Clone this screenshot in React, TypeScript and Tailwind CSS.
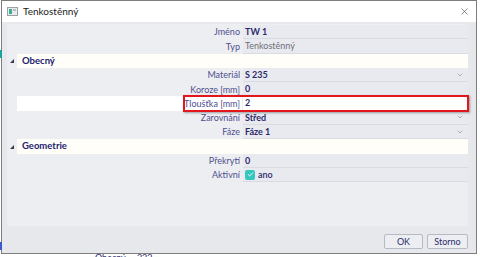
import { ChevronDown, Check, X } from 'lucide-react';

type Row =
  | { kind: 'section'; title: string }
  | { kind: 'prop'; label: string; value: string; muted?: boolean; select?: boolean; check?: boolean; selected?: boolean };

const rows: Row[] = [
  { kind: 'prop', label: 'Jméno', value: 'TW 1' },
  { kind: 'prop', label: 'Typ', value: 'Tenkostěnný', muted: true },
  { kind: 'section', title: 'Obecný' },
  { kind: 'prop', label: 'Materiál', value: 'S 235', select: true },
  { kind: 'prop', label: 'Koroze [mm]', value: '0' },
  { kind: 'prop', label: 'Tloušťka [mm]', value: '2', selected: true },
  { kind: 'prop', label: 'Zarovnání', value: 'Střed', select: true },
  { kind: 'prop', label: 'Fáze', value: 'Fáze 1', select: true },
  { kind: 'section', title: 'Geometrie' },
  { kind: 'prop', label: 'Překrytí', value: '0' },
  { kind: 'prop', label: 'Aktivní', value: 'ano', check: true },
];

function PropRow({ row }: { row: Row }) {
  if (row.kind === 'section') {
    return (
      <div className="flex h-[14.3px] items-center">
        <div className="w-[10px] flex justify-center">
          <span className="block w-0 h-0 border-l-[4px] border-l-transparent border-b-[4px] border-b-[#3a3a4a] mt-[1px]" />
        </div>
        <div className="flex-1 h-full bg-[#fffef8] flex items-center pl-[5px] text-[9.5px] font-bold text-[#22226e]">
          {row.title}
        </div>
      </div>
    );
  }
  return (
    <div className="flex h-[14.3px] items-stretch">
      <div className="w-[10px]" />
      <div
        className={`w-[225px] flex items-center justify-end pr-[2px] text-[9px] text-[#4e4e8e] ${
          row.selected ? 'bg-white' : ''
        }`}
      >
        {row.label}
      </div>
      <div
        className={`flex-1 ml-[1px] flex items-center pl-[2px] pr-[4px] border-b border-[#d9dbe2] ${
          row.selected ? 'bg-white' : 'bg-[#e9eaef]'
        }`}
      >
        {row.check && (
          <span className="w-[10px] h-[10px] rounded-[2px] bg-[#35c6bd] flex items-center justify-center mr-[3px]">
            <Check size={7} strokeWidth={3} color="white" />
          </span>
        )}
        <span
          className={`flex-1 text-[9px] ${
            row.muted ? 'text-[#6d6d7a] font-normal' : row.check ? 'text-[#2b2b6b] font-semibold' : 'text-[#2b2b6b] font-bold'
          }`}
        >
          {row.value}
        </span>
        {row.select && <ChevronDown size={8} strokeWidth={2} color="#8d92a3" />}
      </div>
    </div>
  );
}

export default function App() {
  return (
    <div className="w-[480px] h-[257px] bg-white relative overflow-hidden font-['Lato','Open_Sans',sans-serif]">
      <div className="absolute left-0 top-[50px] w-[2px] h-[8px] bg-[#1aa39a]" />
      <div className="absolute left-0 top-[242px] w-[2px] h-[8px] bg-[#3a5ad0]" />

      <div className="ml-[1px] w-[476px] h-[254px] border border-[#7d7d7d] bg-[#e6e8ec] flex flex-col">
        {/* title bar */}
        <div className="h-[21px] bg-white flex items-center pl-[5px] pr-[6px] shrink-0">
          <svg width="11" height="9" viewBox="0 0 11 9" className="mr-[5px]">
            <rect x="0.5" y="0.5" width="10" height="8" fill="#e9ecef" stroke="#9aa0a8" />
            <rect x="2" y="2" width="3" height="5" fill="#3fae8a" />
            <rect x="6" y="2" width="3" height="2" fill="#b8bec6" />
          </svg>
          <span className="text-[10px] text-[#1b1b1b] flex-1">Tenkostěnný</span>
          <X size={11} strokeWidth={1.2} color="#333" />
        </div>

        {/* body */}
        <div className="flex-1 flex px-[5px] pt-[2px]">
          <div className="w-[461px] h-[202px] bg-[#edeef2] pt-[1px] relative">
            {rows.map((r, i) => (
              <PropRow key={i} row={r} />
            ))}
            <div className="absolute left-[176px] top-[71px] w-[286px] h-[17px] border-2 border-[#e3161b] shadow-[1px_1px_2px_rgba(0,0,0,0.35)]" />
          </div>
        </div>

        {/* footer */}
        <div className="h-[26px] flex justify-end items-start gap-[4px] pr-[8px] pt-[7px] shrink-0">
          <button className="w-[39px] h-[15px] border border-[#b7bac6] rounded-[2px] bg-[#eceef1] text-[9px] text-[#2b2b6b]">
            OK
          </button>
          <button className="w-[41px] h-[15px] border border-[#b7bac6] rounded-[2px] bg-[#eceef1] text-[9px] text-[#2b2b6b]">
            Storno
          </button>
        </div>
      </div>

      <div className="h-[3px] overflow-hidden flex items-start pl-[95px]">
        <span className="text-[9px] text-[#2b2b6b] leading-none mt-[-1px]">Obecný … 222</span>
      </div>
    </div>
  );
}
